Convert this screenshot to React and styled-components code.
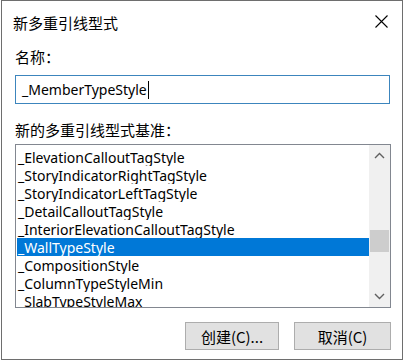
import React from "react";
import styled, { createGlobalStyle } from "styled-components";

const Global = createGlobalStyle`
  html, body { margin: 0; padding: 0; background: #fff; }
  body { font-family: "Noto Sans", "Noto Sans CJK SC", sans-serif; }
`;

const Window = styled.div`
  box-sizing: border-box;
  margin-left: 1px;
  width: 402px;
  height: 360px;
  border: 1px solid #6e6e6e;
  background: #fff;
  display: flex;
  flex-direction: column;
`;

const TitleBar = styled.div`
  height: 43px;
  display: flex;
  align-items: center;
  justify-content: space-between;
  padding: 0 14px 0 11px;
  flex-shrink: 0;
`;

const Title = styled.div`
  font-family: "Noto Sans CJK SC", sans-serif;
  font-size: 15px;
  color: #000;
  margin-top: -1px;
`;

const Close = styled.div`
  width: 14px;
  height: 14px;
  display: flex;
  align-items: center;
  justify-content: center;
  margin-top: -3px;
`;

const Body = styled.div`
  padding: 0 12px 0 13px;
  display: flex;
  flex-direction: column;
`;

const Label = styled.div`
  font-family: "Noto Sans CJK SC", sans-serif;
  font-size: 15px;
  line-height: 20px;
  color: #000;
  margin-top: ${(p) => p.$top}px;
`;

const Input = styled.div`
  box-sizing: border-box;
  margin-top: 8px;
  height: 29px;
  width: 375px;
  border: 1px solid #3c85bd;
  display: flex;
  align-items: center;
  padding-left: 6px;
  font-family: "Noto Sans", sans-serif;
  font-size: 14px;
  color: #000;
`;

const Caret = styled.span`
  display: inline-block;
  width: 1px;
  height: 18px;
  background: #000;
  margin-left: 1px;
`;

const List = styled.div`
  box-sizing: border-box;
  margin-top: 4px;
  width: 376px;
  height: 164px;
  border: 1px solid #828790;
  display: flex;
  overflow: hidden;
`;

const Items = styled.div`
  flex: 1;
  padding: 3px 0 0 1px;
  overflow: hidden;
`;

const Item = styled.div`
  height: 18px;
  line-height: 19px;
  padding-left: 1px;
  font-family: "Noto Sans", sans-serif;
  font-size: 14px;
  white-space: nowrap;
  overflow: hidden;
  color: ${(p) => (p.$sel ? "#fff" : "#000")};
  background: ${(p) => (p.$sel ? "#0078d7" : "transparent")};
`;

const Scroll = styled.div`
  width: 21px;
  background: #f0f0f0;
  display: flex;
  flex-direction: column;
  align-items: center;
`;

const Arrow = styled.div`
  height: 21px;
  width: 21px;
  display: flex;
  align-items: center;
  justify-content: center;
`;

const Track = styled.div`
  flex: 1;
  width: 100%;
  display: flex;
  flex-direction: column;
  align-items: center;
`;

const Thumb = styled.div`
  width: 19px;
  height: 22px;
  background: #cdcdcd;
  margin-top: ${(p) => p.$top}px;
`;

const Buttons = styled.div`
  margin-top: 14px;
  display: flex;
  justify-content: flex-end;
  gap: 15px;
  width: 376px;
`;

const Button = styled.div`
  box-sizing: border-box;
  width: ${(p) => p.$w}px;
  height: 28px;
  background: #e1e1e1;
  border: 1px solid #adadad;
  display: flex;
  align-items: center;
  justify-content: center;
  font-family: "Noto Sans CJK SC", sans-serif;
  font-size: 15px;
  color: #000;
`;

const items = [
  "_ElevationCalloutTagStyle",
  "_StoryIndicatorRightTagStyle",
  "_StoryIndicatorLeftTagStyle",
  "_DetailCalloutTagStyle",
  "_InteriorElevationCalloutTagStyle",
  "_WallTypeStyle",
  "_CompositionStyle",
  "_ColumnTypeStyleMin",
  "_SlabTypeStyleMax",
];

const Chevron = ({ up }) => (
  <svg width="11" height="7" viewBox="0 0 11 7">
    <path
      d={up ? "M1 6 L5.5 1.5 L10 6" : "M1 1 L5.5 5.5 L10 1"}
      fill="none"
      stroke="#606060"
      strokeWidth="1.4"
    />
  </svg>
);

export default function App() {
  return (
    <>
      <Global />
      <Window>
        <TitleBar>
          <Title>新多重引线型式</Title>
          <Close>
            <svg width="13" height="13" viewBox="0 0 13 13">
              <path d="M0.5 0.5 L12.5 12.5 M12.5 0.5 L0.5 12.5" stroke="#000" strokeWidth="1.1" />
            </svg>
          </Close>
        </TitleBar>
        <Body>
          <Label $top={3}>名称：</Label>
          <Input>
            _MemberTypeStyle
            <Caret />
          </Input>
          <Label $top={16}>新的多重引线型式基准：</Label>
          <List>
            <Items>
              {items.map((t) => (
                <Item key={t} $sel={t === "_WallTypeStyle"}>
                  {t}
                </Item>
              ))}
            </Items>
            <Scroll>
              <Arrow>
                <Chevron up />
              </Arrow>
              <Track>
                <Thumb $top={64} />
              </Track>
              <Arrow>
                <Chevron />
              </Arrow>
            </Scroll>
          </List>
          <Buttons>
            <Button $w={94}>创建(C)...</Button>
            <Button $w={97}>取消(C)</Button>
          </Buttons>
        </Body>
      </Window>
    </>
  );
}
